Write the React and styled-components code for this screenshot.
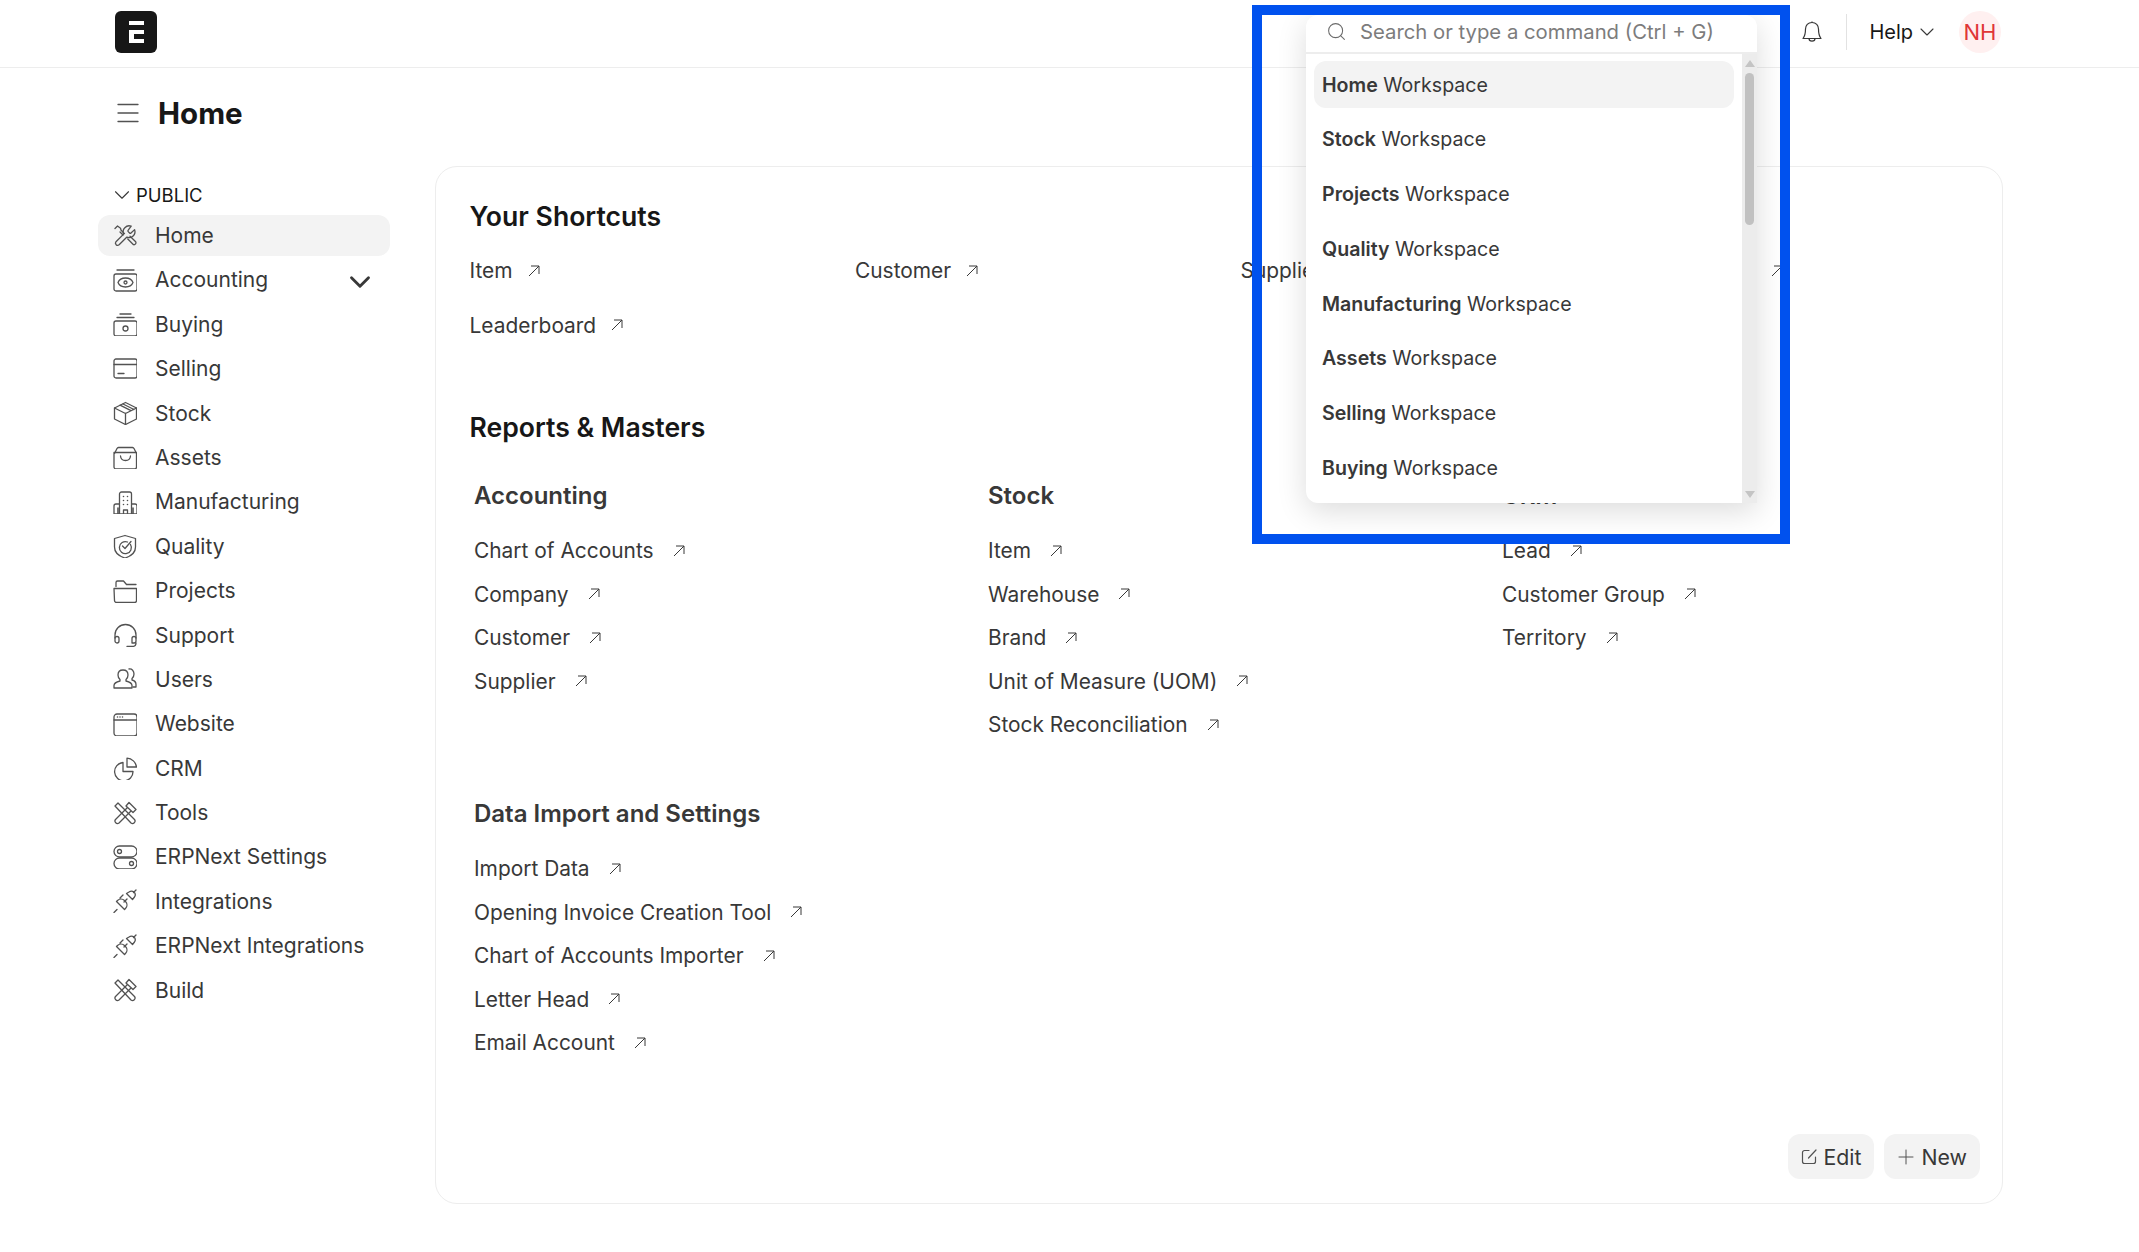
import React from 'react';
import styled, { createGlobalStyle } from 'styled-components';
import { ChevronDown, Search, Plus } from 'lucide-react';

const GlobalStyle = createGlobalStyle`
  html, body {
    margin: 0;
    padding: 0;
    background: #fff;
    font-family: Inter, "Noto Sans", sans-serif;
    color: #383838;
  }
  * { box-sizing: border-box; }
`;

const Svg = ({ children }) => (
  <svg width="24" height="24" viewBox="0 0 24 24" fill="none" stroke="#525252" strokeWidth="1.3" strokeLinecap="round" strokeLinejoin="round">
    {children}
  </svg>
);

const icons = {
  tool: (
    <>
      <path d="M15.2 6.2a1 1 0 0 0 0 1.4l1.4 1.4a1 1 0 0 0 1.4 0l3.6-3.4a6 6 0 0 1-7.9 7.6l-7.6 7.6a2.2 2.2 0 0 1-3.1-3.1l7.6-7.6a6 6 0 0 1 7.6-7.9z" />
      <path d="M2 4.5 4.500 2l3 2.200.6 2 3.400 3.400M7 8l3 3M14.800 15l5.700 5.700a2 2 0 0 0 2.200-2.900L17 12.200" />
    </>
  ),
  accounting: (
    <>
      <rect x="1" y="6" width="23" height="17" rx="2" />
      <path d="M4 2h17M12.500 10c-3.500 0-6.500 2-7.500 4.500 1 2.500 4 4.500 7.500 4.500s6.500-2 7.500-4.500c-1-2.500-4-4.500-7.500-4.500z" />
      <circle cx="12.500" cy="14.500" r="1.500" />
    </>
  ),
  buying: (
    <>
      <rect x="1" y="9" width="23" height="15" rx="2" />
      <path d="M7 2h11M4 5.500h17" />
      <circle cx="12.500" cy="16.500" r="2.500" />
    </>
  ),
  selling: (
    <>
      <rect x="1" y="2" width="23" height="19" rx="2" />
      <path d="M1 7.500h23M5 16.500h6" />
    </>
  ),
  stock: (
    <>
      <path d="M12.500 1.500 23.500 7v11l-11 5.500-11-5.500V7z" />
      <path d="M1.500 7l11 5.500L23.500 7M12.500 12.500v11M7 4.200l11 5.500M10 3l11 5.500" />
    </>
  ),
  assets: (
    <>
      <path d="M1.500 8.500 4 3.500A2 2 0 0 1 5.500 2.500h14A2 2 0 0 1 21 3.500l2.500 5V22a2 2 0 0 1-2 2H3a2 2 0 0 1-2-2V8.500z" />
      <path d="M1 7.500h22.500M7.500 11c.5 6 9.500 6 10 0" />
    </>
  ),
  manufacturing: (
    <>
      <path d="M6.500 24V4a2 2 0 0 1 2-2h8a2 2 0 0 1 2 2v20M6.500 14H3a2 2 0 0 0-2 2v8h23v-8a2 2 0 0 0-2-2h-3.500M10.500 24v-4h4v4" />
      <path d="M10.500 6.500v.01M14.500 6.500v.01M10.500 10.500v.01M14.500 10.500v.01M10.500 14.500v.01M14.500 14.500v.01M5 18v6M20 18v6" strokeWidth="1.600" />
    </>
  ),
  quality: (
    <>
      <path d="M12 1.500 22.500 4.500v8.500c0 5-4 9-10.500 11C5.500 22 1.500 18 1.500 13V4.500z" />
      <path d="M17.500 10.500a6 6 0 1 1-3-2.500M9.500 12l2.500 2.500 6-7" />
    </>
  ),
  projects: (
    <>
      <path d="M3 7.500V3.500a1.500 1.500 0 0 1 1.500-1.500h6l3 3.500h9.500" />
      <path d="M1 9.500h22.500v12a2 2 0 0 1-2 2H3.500A2 2 0 0 1 1.500 21.500z" />
    </>
  ),
  support: (
    <>
      <path d="M2 15V12a10.500 10.500 0 0 1 21 0v3" />
      <path d="M2 15.500a2 2 0 0 1 4 0V18a2 2 0 0 1-4 0zM19 15.500a2 2 0 0 1 4 0V18a2 2 0 0 1-2 2h-2zM23 20c0 2.500-2 3.500-4 3.500h-5" />
    </>
  ),
  users: (
    <>
      <path d="M10 3c-3 0-5 2-5 5 0 2 .8 3.500 2 4.500V14c-2 .5-6 2-6 4.500V21h18v-2.500c0-2.500-4-4-6-4.500v-1.500c1.200-1 2-2.500 2-4.500 0-3-2-5-5-5z" />
      <path d="M16 2c3-.5 5 2 5 5 0 2-.8 3.500-2 4.500V13c2 .5 4 2 4 4.500V20h-3" />
    </>
  ),
  website: (
    <>
      <rect x="1" y="2" width="23" height="22" rx="3" />
      <path d="M1 8h23" />
      <path d="M4.500 5h.01M7 5h.01M9.500 5h.01" strokeWidth="1.600" />
    </>
  ),
  crm: (
    <>
      <path d="M10 6.500A9.200 9.200 0 1 0 20 15.500H10z" />
      <path d="M14 2.200V11h9.500A10 10 0 0 0 14 2.200z" />
    </>
  ),
  hammer: (
    <>
      <path d="M2 5 5 2l16.500 16.500a2.500 2.500 0 0 1-3.500 3.500z" />
      <path d="M13 5l3-3.500 7 7-3 3zM14.500 6.500 2.500 18.500a2.500 2.500 0 0 0 3.500 3.500L18 10" />
    </>
  ),
  settings: (
    <>
      <rect x="1" y="1" width="23" height="11" rx="5.500" />
      <rect x="1" y="13" width="23" height="11" rx="5.500" />
      <circle cx="6.500" cy="6.500" r="2" />
      <circle cx="18.500" cy="18.500" r="2" />
    </>
  ),
  plug: (
    <>
      <path d="M1 23.500l3-3M3.500 12.500l8 8 1-1a5 5 0 0 0 0-7l-1-1a5 5 0 0 0-7 0zM7 9l3-3M11 13l3-3" />
      <path d="M13.500 4.500l6 6 2-2.500c1-1.500 1-3.500-.5-5-1.500-1-3.500-1-5 0zM20.500 3.500 23 1" />
    </>
  ),
};

const NorthEast = () => (
  <svg width="14" height="14" viewBox="0 0 14 14" fill="none" stroke="#383838" strokeWidth="1">
    <path d="M2 12 12 2M4 2h8v8" />
  </svg>
);

const sideItems = [
  ['Home', 'tool'], ['Accounting', 'accounting'], ['Buying', 'buying'], ['Selling', 'selling'],
  ['Stock', 'stock'], ['Assets', 'assets'], ['Manufacturing', 'manufacturing'], ['Quality', 'quality'],
  ['Projects', 'projects'], ['Support', 'support'], ['Users', 'users'], ['Website', 'website'],
  ['CRM', 'crm'], ['Tools', 'hammer'], ['ERPNext Settings', 'settings'], ['Integrations', 'plug'],
  ['ERPNext Integrations', 'plug'], ['Build', 'hammer'],
];

const shortcuts = ['Item', 'Customer', 'Supplier', 'Sales Invoice', 'Leaderboard'];

const cards = [
  { title: 'Accounting', links: ['Chart of Accounts', 'Company', 'Customer', 'Supplier'] },
  { title: 'Stock', links: ['Item', 'Warehouse', 'Brand', 'Unit of Measure (UOM)', 'Stock Reconciliation'] },
  { title: 'CRM', links: ['Lead', 'Customer Group', 'Territory'] },
  { title: 'Data Import and Settings', links: ['Import Data', 'Opening Invoice Creation Tool', 'Chart of Accounts Importer', 'Letter Head', 'Email Account'] },
];

const workspaces = ['Home', 'Stock', 'Projects', 'Quality', 'Manufacturing', 'Assets', 'Selling', 'Buying'];

const App = () => (
  <>
    <GlobalStyle />
    <Page>
      <Navbar>
        <Logo>
          <svg width="15" height="22" viewBox="0 0 15 22" fill="#fff">
            <path d="M0 0h15v4H0zM0 9h15v4H5v5h10v4H0z" />
          </svg>
        </Logo>
        <NavRight>
          <svg width="22" height="24" viewBox="0 0 22 24" fill="none" stroke="#383838" strokeWidth="1.200" strokeLinejoin="round">
            <path d="M11 2.500c-4 0-6.500 3-6.500 6.500 0 5-.5 7-2.500 9.500h18c-2-2.500-2.500-4.500-2.500-9.500 0-3.500-2.500-6.500-6.500-6.500z" />
            <path d="M8 18.500c0 3.500 6 3.500 6 0M11 2.500v-1" />
          </svg>
          <NavDivider />
          <HelpText>Help</HelpText>
          <ChevronDown size={24} strokeWidth={1.100} color="#383838" />
          <Avatar>NH</Avatar>
        </NavRight>
      </Navbar>
      <Main>
        <TitleRow>
          <svg width="22" height="20" viewBox="0 0 22 20" fill="none" stroke="#525252" strokeWidth="1.300" strokeLinecap="round">
            <path d="M1 1.500h20M1 10h20M1 18.500h20" />
          </svg>
          <PageTitle>Home</PageTitle>
        </TitleRow>
        <Columns>
          <Sidebar>
            <SectionLabel>
              <ChevronDown size={26} strokeWidth={1} color="#383838" />
              PUBLIC
            </SectionLabel>
            {sideItems.map(([label, icon], i) => (
              <SideRow key={label} $active={i === 0}>
                <Svg>{icons[icon]}</Svg>
                <SideLabel>{label}</SideLabel>
                {label === 'Accounting' && (
                  <Expand>
                    <ChevronDown size={34} strokeWidth={2} color="#383838" />
                  </Expand>
                )}
              </SideRow>
            ))}
          </Sidebar>
          <Card>
            <BlockTitle>Your Shortcuts</BlockTitle>
            <ShortcutGrid>
              {shortcuts.map(s => (
                <LinkRow key={s}>
                  {s}
                  <NorthEast />
                </LinkRow>
              ))}
            </ShortcutGrid>
            <ReportsTitle>Reports &amp; Masters</ReportsTitle>
            <LinkCards>
              {cards.map(c => (
                <LinkCard key={c.title}>
                  <CardTitle>{c.title}</CardTitle>
                  {c.links.map(l => (
                    <CardLink key={l}>
                      {l}
                      <NorthEast />
                    </CardLink>
                  ))}
                </LinkCard>
              ))}
            </LinkCards>
            <CardActions>
              <ActionButton>
                <svg width="17" height="17" viewBox="0 0 17 17" fill="none" stroke="#525252" strokeWidth="1.200" strokeLinecap="round">
                  <path d="M8 2.500H3.500a2 2 0 0 0-2 2v9a2 2 0 0 0 2 2h9a2 2 0 0 0 2-2V9M7.500 10l7.500-8" />
                </svg>
                Edit
              </ActionButton>
              <ActionButton>
                <Plus size={24} strokeWidth={1} color="#525252" />
                New
              </ActionButton>
            </CardActions>
          </Card>
        </Columns>
      </Main>

      <Highlight />
      <Dropdown>
        <SearchRow>
          <Search size={21} strokeWidth={1.200} color="#6b6b6b" />
          Search or type a command (Ctrl + G)
        </SearchRow>
        <ListWrap>
          <List>
            {workspaces.map((w, i) => (
              <ListItem key={w} $active={i === 0}>
                <b>{w}</b> Workspace
              </ListItem>
            ))}
          </List>
          <Track>
            <ArrowUp />
            <Thumb />
            <ArrowDown />
          </Track>
        </ListWrap>
      </Dropdown>
    </Page>
  </>
);

const Page = styled.div`
  position: relative;
  width: 2139px;
  height: 1252px;
  overflow: hidden;
`;

const Navbar = styled.header`
  height: 68px;
  padding: 0 138px 3px 115px;
  border-bottom: 1px solid #ededed;
  display: flex;
  align-items: center;
  justify-content: space-between;
`;

const Logo = styled.div`
  width: 42px;
  height: 42px;
  background: #171717;
  border-radius: 6px;
  display: flex;
  align-items: center;
  justify-content: center;
`;

const NavRight = styled.div`
  display: flex;
  align-items: center;
`;

const NavDivider = styled.div`
  width: 1px;
  height: 36px;
  background: #e2e2e2;
  margin: 0 22px 0 23px;
`;

const HelpText = styled.span`
  font-size: 20px;
  color: #171717;
  margin-right: 2px;
`;

const Avatar = styled.div`
  width: 42px;
  height: 42px;
  margin-left: 20px;
  border-radius: 50%;
  background: #fff0f0;
  color: #e03636;
  font-size: 22px;
  display: flex;
  align-items: center;
  justify-content: center;
`;

const Main = styled.main`
  padding: 0 136px 0 98px;
`;

const TitleRow = styled.div`
  height: 98px;
  padding: 0 0 8px 19px;
  display: flex;
  align-items: center;
  gap: 19px;
`;

const PageTitle = styled.h1`
  margin: 0;
  font-size: 29.5px;
  font-weight: 700;
  color: #171717;
`;

const Columns = styled.div`
  display: grid;
  grid-template-columns: 292px 1568px;
  gap: 45px;
`;

const Sidebar = styled.nav`
  display: flex;
  flex-direction: column;
`;

const SectionLabel = styled.div`
  height: 49px;
  padding: 8px 0 0 10.5px;
  display: flex;
  align-items: center;
  gap: 1.5px;
  font-size: 18.5px;
  color: #171717;
`;

const SideRow = styled.div`
  position: relative;
  height: 41px;
  margin-bottom: 3.4px;
  padding-left: 14.5px;
  border-radius: 12px;
  background: ${props => (props.$active ? '#f3f3f3' : 'transparent')};
  display: flex;
  align-items: center;
  gap: 18.5px;
`;

const SideLabel = styled.span`
  font-size: 21px;
  color: #383838;
`;

const Expand = styled.span`
  margin-left: auto;
  margin-right: 13px;
  height: 0;
  display: flex;
  align-items: center;
  padding-top: 5px;
`;

const Card = styled.section`
  position: relative;
  height: 1038px;
  padding: 28.5px 33.5px;
  border: 1px solid #ededed;
  border-radius: 22px;
`;

const BlockTitle = styled.h2`
  margin: 0;
  font-size: 26.6px;
  line-height: 40px;
  font-weight: 600;
  color: #171717;
`;

const ReportsTitle = styled(BlockTitle)`
  margin-top: 54.5px;
`;

const ShortcutGrid = styled.div`
  margin-top: 8px;
  display: grid;
  grid-template-columns: repeat(4, 385.5px);
  grid-auto-rows: 54.5px;
`;

const LinkRow = styled.div`
  display: flex;
  align-items: center;
  gap: 14px;
  font-size: 20.9px;
  color: #383838;
  height: 54.5px;
`;

const LinkCards = styled.div`
  margin-top: 29px;
  padding-left: 4.5px;
  display: grid;
  grid-template-columns: repeat(3, 514px);
  row-gap: 47.5px;
`;

const LinkCard = styled.div`
  display: flex;
  flex-direction: column;
`;

const CardTitle = styled.h3`
  margin: 0 0 13px;
  font-size: 24px;
  line-height: 40px;
  font-weight: 600;
  color: #383838;
`;

const CardLink = styled.div`
  height: 43.5px;
  display: flex;
  align-items: center;
  gap: 18px;
  font-size: 20.9px;
  color: #383838;
`;

const CardActions = styled.div`
  position: absolute;
  right: 22px;
  bottom: 24px;
  display: flex;
  gap: 10px;
`;

const ActionButton = styled.button`
  height: 45px;
  padding: 0 13px;
  border: 0;
  border-radius: 12px;
  background: #f3f3f3;
  display: flex;
  align-items: center;
  gap: 6px;
  font-family: inherit;
  font-size: 21.3px;
  color: #383838;
  svg.lucide {
    margin: 0 -3px;
  }
`;

const Highlight = styled.div`
  position: absolute;
  left: 1252px;
  top: 5px;
  width: 538px;
  height: 539px;
  border: 10px solid #0051ee;
  z-index: 2;
  pointer-events: none;
`;

const Dropdown = styled.div`
  position: absolute;
  left: 1306px;
  top: 15px;
  width: 451px;
  height: 488px;
  background: #fff;
  border-radius: 12px 12px 0 12px;
  box-shadow: 0 8px 30px rgba(0, 0, 0, 0.14);
  display: flex;
  flex-direction: column;
  overflow: hidden;
  z-index: 1;
`;

const SearchRow = styled.div`
  height: 39px;
  flex: none;
  padding: 0 0 4px 20px;
  border-bottom: 2px solid #ededed;
  display: flex;
  align-items: center;
  gap: 13px;
  font-size: 20.3px;
  color: #7c7c7c;
`;

const ListWrap = styled.div`
  flex: 1;
  display: flex;
  min-height: 0;
`;

const List = styled.ul`
  flex: 1;
  margin: 0;
  padding: 7px 8px 0 8px;
  list-style: none;
`;

const ListItem = styled.li`
  height: 47px;
  margin-bottom: 7.8px;
  padding-left: 8px;
  border-radius: 12px;
  background: ${props => (props.$active ? '#f3f3f3' : 'transparent')};
  display: flex;
  align-items: center;
  font-size: 19.6px;
  color: #383838;
  white-space: pre;
  b {
    font-weight: 600;
  }
`;

const Track = styled.div`
  width: 15px;
  flex: none;
  background: #ececec;
  display: flex;
  flex-direction: column;
  align-items: center;
`;

const ArrowUp = styled.div`
  margin-top: 6px;
  border-left: 5px solid transparent;
  border-right: 5px solid transparent;
  border-bottom: 7px solid #c4c4c4;
`;

const ArrowDown = styled.div`
  margin-top: auto;
  margin-bottom: 5px;
  border-left: 5px solid transparent;
  border-right: 5px solid transparent;
  border-top: 7px solid #c4c4c4;
`;

const Thumb = styled.div`
  width: 9px;
  height: 152px;
  margin-top: 6px;
  border-radius: 5px;
  background: #c1c1c1;
`;

export default App;
